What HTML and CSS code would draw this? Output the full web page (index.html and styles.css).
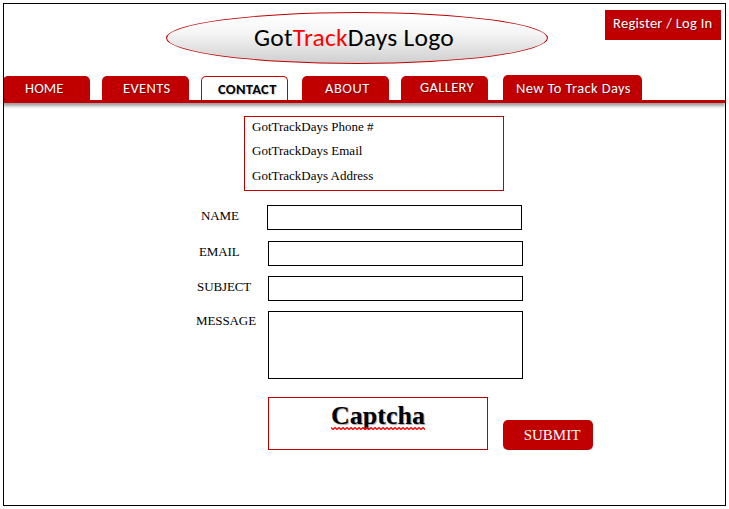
FILE: index.html
```html
<!DOCTYPE html>
<html lang="en">
<head>
<meta charset="utf-8">
<title>GotTrackDays - Contact</title>
<link rel="stylesheet" href="styles.css">
</head>
<body>
<div class="page">
  <header class="header">
    <div class="logo"><span class="logo-text">Got<span class="accent">Track</span>Days Logo</span></div>
    <a class="login"><span>Register / Log In</span></a>
  </header>
  <nav class="tabs">
    <a class="tab home"><span>HOME</span></a>
    <a class="tab events"><span>EVENTS</span></a>
    <a class="tab active"><span>CONTACT</span></a>
    <a class="tab about"><span>ABOUT</span></a>
    <a class="tab gallery"><span>GALLERY</span></a>
    <a class="tab wide"><span>New To Track Days</span></a>
  </nav>
  <main class="content">
    <section class="info">
      <p>GotTrackDays Phone #</p>
      <p>GotTrackDays Email</p>
      <p>GotTrackDays Address</p>
    </section>
    <form class="form">
      <div class="row name"><label for="name">NAME</label><input id="name" type="text"></div>
      <div class="row email"><label for="email">EMAIL</label><input id="email" type="text"></div>
      <div class="row subject"><label for="subject">SUBJECT</label><input id="subject" type="text"></div>
      <div class="row message"><label for="message">MESSAGE</label><textarea id="message"></textarea></div>
      <div class="actions">
        <div class="captcha">
          <span class="captcha-text">Captcha</span>
          <svg class="squiggle" width="94" height="3" viewBox="0 0 94 3"><defs><pattern id="wave" width="4" height="3" patternUnits="userSpaceOnUse"><path d="M-1 1.5L0 .5L2 2.5L4 .5L5 1.5" fill="none" stroke="#f00" stroke-width="1.3"/></pattern></defs><rect width="94" height="3" fill="url(#wave)"/></svg>
        </div>
        <button class="submit" type="button">SUBMIT</button>
      </div>
    </form>
  </main>
</div>
</body>
</html>
```
FILE: styles.css
```css
* { box-sizing: border-box; }
body { margin: 0; padding: 3px; background: #fff; color: #000; font-family: "Liberation Serif", serif; }
.page { width: 723px; height: 503px; border: 1px solid #000; overflow: hidden; }
.header { display: flex; height: 71px; padding: 6px 4px 0 162px; justify-content: space-between; align-items: flex-start; font-family: Carlito, Lato, sans-serif; }
.logo { width: 382px; height: 52px; margin-top: 2px; padding-right: 6px; border: 1px solid #c00000; border-radius: 50%; background: linear-gradient(#fff 5%, #f5f5f5 40%, #cfcfcf); text-align: center; font-size: 25.5px; line-height: 50px; white-space: nowrap; }
.logo-text { letter-spacing: .25px; }
.accent { color: #f00; }
.login { width: 116px; height: 30px; padding-left: 8px; background: #c00000; color: #fff; font-size: 14.5px; line-height: 27px; letter-spacing: .28px; white-space: nowrap; text-shadow: 1px 1px 1px rgba(0,0,0,.35); }
.tabs { position: relative; display: flex; align-items: flex-end; height: 28px; margin-left: -1px; border-bottom: 3px solid #c00000; box-shadow: 0 3px 3px rgba(0,0,0,.38); font-family: Carlito, Lato, sans-serif; font-size: 14.5px; line-height: 25px; letter-spacing: .35px; color: #fff; white-space: nowrap; }
.tab { width: 87px; height: 24px; margin-right: 12px; border-radius: 5px 5px 0 0; background: #c00000; text-shadow: 1px 1px 1px rgba(0,0,0,.35); }
.home { padding-left: 22px; letter-spacing: .1px; }
.events { padding-left: 21px; }
.active { margin-right: 14px; padding-left: 16px; border: 1px solid #c00000; border-bottom: 0; background: #fff; color: #000; font-weight: 700; line-height: 24px; letter-spacing: .3px; text-shadow: 1px 1px 1px rgba(0,0,0,.2); }
.about { padding-left: 23px; letter-spacing: .5px; }
.gallery { padding-left: 19px; line-height: 23px; }
.wide { width: 139px; height: 25px; margin-left: 3px; padding-left: 13px; line-height: 27px; letter-spacing: .38px; }
.content { padding-top: 13px; }
.info { width: 260px; height: 75px; margin-left: 240px; padding: 0 7px; border: 1px solid #c00000; font-size: 13px; line-height: 24px; }
.info p { margin: -2px 0 2px; }
.info p + p { margin: -2px 0 2px; }
.info p:last-child { margin-top: -1px; }
.form { width: 330px; margin: 14px 0 0 192px; }
.row { display: flex; justify-content: space-between; width: 327px; height: 25px; font-size: 13px; line-height: 22px; letter-spacing: -.1px; }
.row input, .row textarea { display: block; width: 255px; height: 100%; margin: 0; padding: 2px 6px; border: 1px solid #000; border-radius: 0; background: #fff; resize: none; outline: 0; }
.name { width: 326px; padding-left: 5px; margin-bottom: 11px; }
.email { padding-left: 3px; margin-bottom: 10px; }
.subject { padding-left: 1px; margin-bottom: 10px; }
.message { height: 68px; line-height: 20px; }
.actions { display: flex; align-items: flex-end; gap: 15px; margin: 18px 0 0 72px; width: 330px; }
.captcha { display: flex; flex-direction: column; align-items: center; width: 220px; height: 53px; border: 1px solid #c00000; }
.captcha-text { height: 29px; font-size: 26px; line-height: 36px; font-weight: 700; text-shadow: 1px 1px 1px rgba(0,0,0,.35); }
.squiggle { display: block; }
.submit { width: 90px; height: 30px; padding: 0 0 0 8px; border: 0; border-radius: 5px; background: #c00000; color: #fff; font: 15px/30px "Liberation Serif", serif; }
```
